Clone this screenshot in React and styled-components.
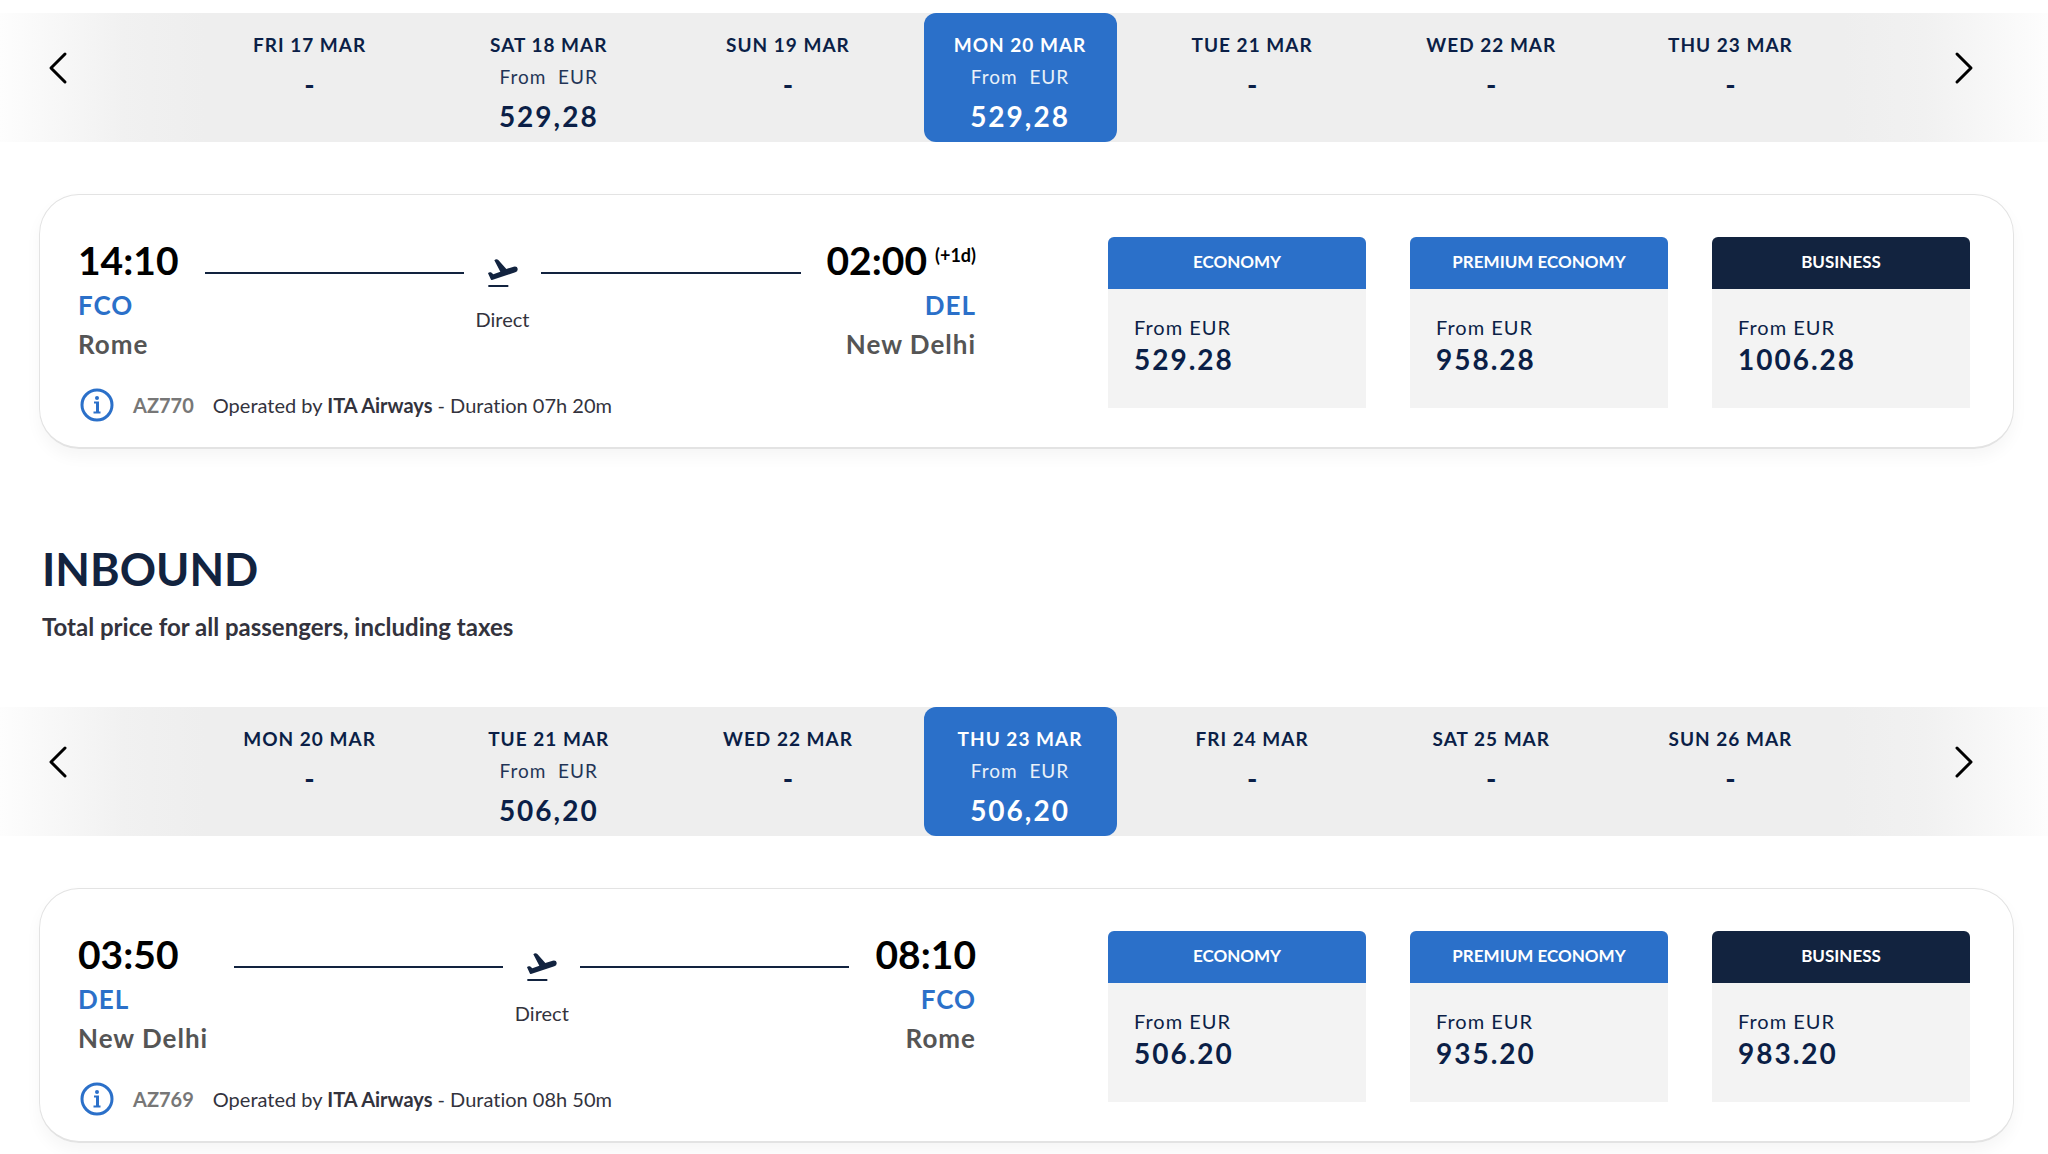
import React from 'react';
import styled, { createGlobalStyle } from 'styled-components';

const colors = {
  blue: '#2b70c9',
  navy: '#12233f',
  ink: '#0b1f47',
  text: '#33333d',
  grey: '#555555',
};

const flights = [
  {
    id: 'outbound',
    selected: 3,
    days: [
      { date: 'FRI 17 MAR' },
      { date: 'SAT 18 MAR', price: '529,28' },
      { date: 'SUN 19 MAR' },
      { date: 'MON 20 MAR', price: '529,28' },
      { date: 'TUE 21 MAR' },
      { date: 'WED 22 MAR' },
      { date: 'THU 23 MAR' },
    ],
    from: { time: '14:10', code: 'FCO', city: 'Rome' },
    to: { time: '02:00', extra: '(+1d)', code: 'DEL', city: 'New Delhi' },
    number: 'AZ770',
    duration: '07h 20m',
    fares: ['529.28', '958.28', '1006.28'],
  },
  {
    id: 'inbound',
    title: 'INBOUND',
    selected: 3,
    days: [
      { date: 'MON 20 MAR' },
      { date: 'TUE 21 MAR', price: '506,20' },
      { date: 'WED 22 MAR' },
      { date: 'THU 23 MAR', price: '506,20' },
      { date: 'FRI 24 MAR' },
      { date: 'SAT 25 MAR' },
      { date: 'SUN 26 MAR' },
    ],
    from: { time: '03:50', code: 'DEL', city: 'New Delhi' },
    to: { time: '08:10', code: 'FCO', city: 'Rome' },
    number: 'AZ769',
    duration: '08h 50m',
    fares: ['506.20', '935.20', '983.20'],
  },
];

const cabins = ['ECONOMY', 'PREMIUM ECONOMY', 'BUSINESS'];

const Chevron = ({ right }) => (
  <svg width="20" height="34" viewBox="0 0 20 34" fill="none" stroke="#000" strokeWidth="3" strokeLinecap="round" strokeLinejoin="round">
    <path d={right ? 'M3 3 L17 17 L3 31' : 'M17 3 L3 17 L17 31'} />
  </svg>
);

const Plane = () => (
  <svg width="30" height="28" viewBox="0 0 90 84" fill={colors.navy}>
    <path d="M19 4 Q25 -2 31 3 L55 30 L77 23 Q88 21 89 29 Q90 37 82 40 L12 63 Q9 64 8 60 L0 43 Q3 38 9 40 L16 46 L37 38 Z" />
    <rect x="1" y="78" width="60" height="6" />
  </svg>
);

const InfoIcon = () => (
  <svg width="34" height="34" viewBox="0 0 34 34" fill="none" stroke={colors.blue}>
    <circle cx="17" cy="17" r="15" strokeWidth="3" />
    <circle cx="17" cy="10" r="2" fill={colors.blue} stroke="none" />
    <path d="M14 14.5 H18 V24.5 M13.5 24.5 H20.5" strokeWidth="2" />
    <path d="M17.5 14 V25" strokeWidth="3" />
  </svg>
);

const DateBar = ({ days, selected }) => (
  <Bar>
    <Arrow aria-label="Previous dates"><Chevron /></Arrow>
    <Days>
      {days.map((day, index) => (
        <Day key={day.date} $active={index === selected} aria-pressed={index === selected}>
          <DayName>{day.date}</DayName>
          {day.price ? (
            <>
              <DayFrom>{'From  EUR'}</DayFrom>
              <DayPrice>{day.price}</DayPrice>
            </>
          ) : (
            <DayEmpty>-</DayEmpty>
          )}
        </Day>
      ))}
    </Days>
    <Arrow $right aria-label="Next dates"><Chevron right /></Arrow>
  </Bar>
);

const Stop = ({ time, extra, code, city, end }) => (
  <StopBox $end={end}>
    <Time $end={end}>
      {time}
      {extra && <Extra>{extra}</Extra>}
    </Time>
    <Code>{code}</Code>
    <City>{city}</City>
  </StopBox>
);

const FlightCard = ({ flight }) => (
  <Card>
    <Journey>
      <Route>
        <Stop {...flight.from} />
        <Line />
        <Middle>
          <Plane />
          <Direct>Direct</Direct>
        </Middle>
        <Line />
        <Stop {...flight.to} end />
      </Route>
      <Details>
        <InfoButton aria-label="Flight details"><InfoIcon /></InfoButton>
        <FlightNumber>{flight.number}</FlightNumber>
        <Operator>
          Operated by <b>ITA Airways</b> - Duration {flight.duration}
        </Operator>
      </Details>
    </Journey>
    <Fares>
      {cabins.map((cabin, index) => (
        <Fare key={cabin}>
          <FareHead $dark={cabin === 'BUSINESS'}>{cabin}</FareHead>
          <FareBody>
            <FareFrom>From EUR</FareFrom>
            <FarePrice>{flight.fares[index]}</FarePrice>
          </FareBody>
        </Fare>
      ))}
    </Fares>
  </Card>
);

const App = () => (
  <Page>
    <GlobalStyle />
    {flights.map(flight => (
      <section key={flight.id}>
        {flight.title && (
          <Heading>
            <Title>{flight.title}</Title>
            <Subtitle>Total price for all passengers, including taxes</Subtitle>
          </Heading>
        )}
        <DateBar days={flight.days} selected={flight.selected} />
        <FlightCard flight={flight} />
      </section>
    ))}
  </Page>
);

export default App;

const GlobalStyle = createGlobalStyle`
  * {
    box-sizing: border-box;
  }
  body {
    margin: 0;
    background: #fff;
    color: ${colors.text};
    font-family: Lato, sans-serif;
    font-variant-ligatures: none;
  }
  button {
    margin: 0;
    padding: 0;
    border: 0;
    background: none;
    color: inherit;
    font-family: inherit;
    cursor: pointer;
  }
  svg {
    display: block;
  }
`;

const Page = styled.main`
  padding: 13px 0 12px;
`;

const Bar = styled.div`
  display: flex;
  height: 129px;
  background: linear-gradient(to right, #fdfdfd 0%, #f1f1f1 6%, #eeeeee 10%, #eeeeee 90%, #f1f1f1 94%, #fdfdfd 100%);
`;

const Arrow = styled.button`
  display: flex;
  flex: none;
  align-items: center;
  justify-content: ${({ $right }) => ($right ? 'flex-end' : 'flex-start')};
  width: ${({ $right }) => ($right ? '198px' : '190px')};
  padding: ${({ $right }) => ($right ? '0 74px 20px 0' : '0 0 20px 48px')};
`;

const Days = styled.div`
  display: flex;
  flex: 1;
`;

const Day = styled.button`
  display: flex;
  flex: ${({ $active }) => ($active ? '0 0 193px' : '1 1 0')};
  flex-direction: column;
  align-items: center;
  margin: ${({ $active }) => ($active ? '0 16px' : '0')};
  padding-top: 20px;
  border-radius: 12px;
  background: ${({ $active }) => ($active ? colors.blue : 'transparent')};
  color: ${({ $active }) => ($active ? '#fff' : colors.ink)};
`;

const DayName = styled.span`
  font-size: 19px;
  font-weight: 700;
  line-height: 24px;
  letter-spacing: 1px;
`;

const DayFrom = styled.span`
  margin-top: 7px;
  font-size: 19px;
  line-height: 26px;
  letter-spacing: 1px;
  white-space: pre;
  opacity: 0.9;
`;

const DayPrice = styled.span`
  margin-top: 9px;
  font-size: 28px;
  font-weight: 700;
  line-height: 34px;
  letter-spacing: 2px;
`;

const DayEmpty = styled.span`
  margin-top: 10px;
  font-size: 28px;
  font-weight: 700;
  line-height: 34px;
`;

const Card = styled.article`
  display: flex;
  margin: 52px 34px 0 39px;
  padding: 42px 43px 25px 38px;
  border: 1px solid #e3e3e3;
  border-bottom-width: 2px;
  border-radius: 40px;
  box-shadow: 0 8px 16px rgba(0, 0, 0, 0.04);
`;

const Journey = styled.div`
  flex: 1;
`;

const Route = styled.div`
  display: flex;
`;

const StopBox = styled.div`
  flex: none;
  margin: ${({ $end }) => ($end ? '0 0 0 26px' : '0 26px 0 0')};
  text-align: ${({ $end }) => ($end ? 'right' : 'left')};
`;

const Time = styled.div`
  display: flex;
  justify-content: ${({ $end }) => ($end ? 'flex-end' : 'flex-start')};
  margin-bottom: 3px;
  color: #000;
  font-size: 39px;
  font-weight: 700;
  line-height: 46px;
`;

const Extra = styled.sup`
  margin-left: 8px;
  font-size: 18px;
  line-height: 36px;
`;

const Code = styled.div`
  color: ${colors.blue};
  font-size: 26px;
  font-weight: 700;
  line-height: 39px;
  letter-spacing: 1px;
`;

const City = styled.div`
  color: ${colors.grey};
  font-size: 26px;
  font-weight: 700;
  line-height: 39px;
  letter-spacing: 1px;
`;

const Line = styled.div`
  flex: 1;
  height: 2px;
  margin-top: 35px;
  background: ${colors.navy};
`;

const Middle = styled.div`
  display: flex;
  flex: none;
  flex-direction: column;
  align-items: center;
  width: 77px;
  padding-top: 22px;
`;

const Direct = styled.span`
  margin-top: 20px;
  font-size: 20px;
  line-height: 24px;
`;

const Details = styled.div`
  display: flex;
  align-items: center;
  margin-top: 24px;
`;

const InfoButton = styled.button`
  margin-left: 2px;
`;

const FlightNumber = styled.span`
  margin-left: 19px;
  color: #777;
  font-size: 20px;
  font-weight: 700;
  line-height: 24px;
`;

const Operator = styled.span`
  margin-left: 19px;
  font-size: 20px;
  line-height: 24px;
`;

const Fares = styled.div`
  display: grid;
  flex: 0 0 862px;
  grid-template-columns: repeat(3, 1fr);
  gap: 44px;
  align-self: flex-start;
  margin-left: 132px;
`;

const Fare = styled.button`
  overflow: hidden;
  border-radius: 6px 6px 0 0;
  background: #f3f3f3;
  text-align: left;
`;

const FareHead = styled.span`
  display: block;
  padding-bottom: 2px;
  background: ${({ $dark }) => ($dark ? colors.navy : colors.blue)};
  color: #fff;
  font-size: 17px;
  font-weight: 700;
  line-height: 50px;
  text-align: center;
`;

const FareBody = styled.span`
  display: flex;
  flex-direction: column;
  height: 119px;
  padding: 25px 26px;
  color: ${colors.ink};
`;

const FareFrom = styled.span`
  font-size: 20px;
  line-height: 26px;
  letter-spacing: 1px;
`;

const FarePrice = styled.span`
  font-size: 28px;
  font-weight: 700;
  line-height: 38px;
  letter-spacing: 2px;
`;

const Heading = styled.header`
  padding: 88px 42px 64px;
`;

const Title = styled.h2`
  margin: 0;
  color: ${colors.navy};
  font-size: 45px;
  font-weight: 700;
  line-height: 64px;
`;

const Subtitle = styled.p`
  margin: 10px 0 0;
  font-size: 24px;
  font-weight: 700;
  line-height: 32px;
`;
